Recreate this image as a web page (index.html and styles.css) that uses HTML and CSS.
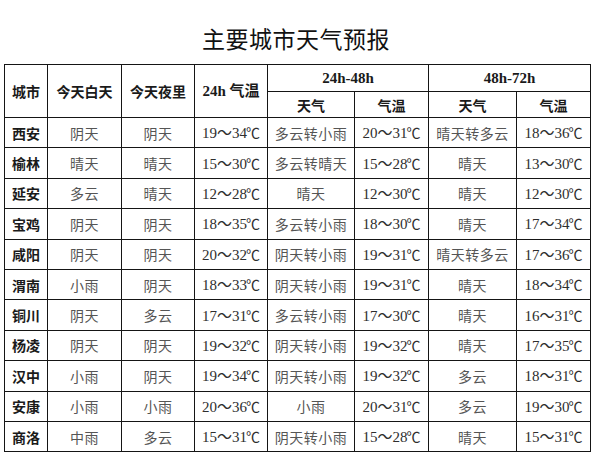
FILE: index.html
```html
<!DOCTYPE html>
<html lang="zh-CN">
<head>
<meta charset="utf-8">
<title>主要城市天气预报</title>
<link rel="stylesheet" href="styles.css">
</head>
<body>
<div class="page">
  <h1 class="title">主要城市天气预报</h1>
  <table class="forecast">
    <colgroup>
      <col class="c-city"><col class="c-day"><col class="c-night"><col class="c-temp">
      <col class="c-w2"><col class="c-t2"><col class="c-w3"><col class="c-t3">
    </colgroup>
    <thead>
      <tr class="h1">
        <th rowspan="2">城市</th>
        <th rowspan="2">今天白天</th>
        <th rowspan="2">今天夜里</th>
        <th rowspan="2" class="num">24h 气温</th>
        <th colspan="2" class="num">24h-48h</th>
        <th colspan="2" class="num">48h-72h</th>
      </tr>
      <tr class="h2">
        <th>天气</th><th>气温</th><th>天气</th><th>气温</th>
      </tr>
    </thead>
    <tbody>
      <tr><th>西安</th><td>阴天</td><td>阴天</td><td class="t">19～34<span class="deg">℃</span></td><td>多云转小雨</td><td class="t">20～31<span class="deg">℃</span></td><td>晴天转多云</td><td class="t">18～36<span class="deg">℃</span></td></tr>
      <tr><th>榆林</th><td>晴天</td><td>晴天</td><td class="t">15～30<span class="deg">℃</span></td><td>多云转晴天</td><td class="t">15～28<span class="deg">℃</span></td><td>晴天</td><td class="t">13～30<span class="deg">℃</span></td></tr>
      <tr><th>延安</th><td>多云</td><td>晴天</td><td class="t">12～28<span class="deg">℃</span></td><td>晴天</td><td class="t">12～30<span class="deg">℃</span></td><td>晴天</td><td class="t">12～30<span class="deg">℃</span></td></tr>
      <tr><th>宝鸡</th><td>阴天</td><td>阴天</td><td class="t">18～35<span class="deg">℃</span></td><td>多云转小雨</td><td class="t">18～30<span class="deg">℃</span></td><td>晴天</td><td class="t">17～34<span class="deg">℃</span></td></tr>
      <tr><th>咸阳</th><td>阴天</td><td>阴天</td><td class="t">20～32<span class="deg">℃</span></td><td>阴天转小雨</td><td class="t">19～31<span class="deg">℃</span></td><td>晴天转多云</td><td class="t">17～36<span class="deg">℃</span></td></tr>
      <tr><th>渭南</th><td>小雨</td><td>阴天</td><td class="t">18～33<span class="deg">℃</span></td><td>阴天转小雨</td><td class="t">19～31<span class="deg">℃</span></td><td>晴天</td><td class="t">18～34<span class="deg">℃</span></td></tr>
      <tr><th>铜川</th><td>阴天</td><td>多云</td><td class="t">17～31<span class="deg">℃</span></td><td>多云转小雨</td><td class="t">17～30<span class="deg">℃</span></td><td>晴天</td><td class="t">16～31<span class="deg">℃</span></td></tr>
      <tr><th>杨凌</th><td>阴天</td><td>阴天</td><td class="t">19～32<span class="deg">℃</span></td><td>阴天转小雨</td><td class="t">19～32<span class="deg">℃</span></td><td>晴天</td><td class="t">17～35<span class="deg">℃</span></td></tr>
      <tr><th>汉中</th><td>小雨</td><td>阴天</td><td class="t">19～34<span class="deg">℃</span></td><td>阴天转小雨</td><td class="t">19～32<span class="deg">℃</span></td><td>多云</td><td class="t">18～31<span class="deg">℃</span></td></tr>
      <tr><th>安康</th><td>小雨</td><td>小雨</td><td class="t">20～36<span class="deg">℃</span></td><td>小雨</td><td class="t">20～31<span class="deg">℃</span></td><td>多云</td><td class="t">19～30<span class="deg">℃</span></td></tr>
      <tr><th>商洛</th><td>中雨</td><td>多云</td><td class="t">15～31<span class="deg">℃</span></td><td>阴天转小雨</td><td class="t">15～28<span class="deg">℃</span></td><td>晴天</td><td class="t">15～31<span class="deg">℃</span></td></tr>
    </tbody>
  </table>
</div>
</body>
</html>
```

FILE: styles.css
```css
html, body {
  margin: 0;
  padding: 0;
  background: #ffffff;
}

.page {
  width: 592px;
  height: 454px;
  padding: 0 0 0 4px;
  box-sizing: border-box;
  font-family: "Noto Sans CJK SC", sans-serif;
}

.title {
  margin: 0;
  height: 64px;
  line-height: 76px;
  padding-right: 4px;
  text-align: center;
  font-size: 23px;
  font-weight: 400;
  color: #111111;
  letter-spacing: 0.5px;
}

.forecast {
  border-collapse: collapse;
  table-layout: fixed;
  width: 586px;
  color: #444444;
}

.c-city { width: 43px; }
.c-day { width: 74px; }
.c-night { width: 73px; }
.c-temp { width: 73px; }
.c-w2 { width: 87px; }
.c-t2 { width: 74px; }
.c-w3 { width: 88px; }
.c-t3 { width: 74px; }

.forecast th,
.forecast td {
  border: 1px solid #151515;
  padding: 0;
  text-align: center;
  vertical-align: middle;
  font-size: 14px;
  line-height: 16px;
  white-space: nowrap;
  overflow: hidden;
}

.forecast th {
  font-weight: 700;
  color: #1a1a1a;
}

.forecast .num {
  font-family: "Liberation Serif", "Noto Sans CJK SC", serif;
  font-size: 15px;
}

.forecast tr.h1 { height: 27px; }
.forecast tr.h2 { height: 26px; }
.forecast tbody tr { height: 30.4px; }

.forecast td {
  color: #555555;
  letter-spacing: 0.5px;
}

.forecast td.t {
  font-family: "Liberation Serif", "Noto Sans CJK SC", serif;
  font-size: 15px;
  color: #2e2e2e;
  letter-spacing: 0;
}

.forecast .deg {
  font-family: "Noto Sans CJK SC", sans-serif;
  font-size: 14px;
  letter-spacing: 0;
  margin-left: -1px;
}
```
